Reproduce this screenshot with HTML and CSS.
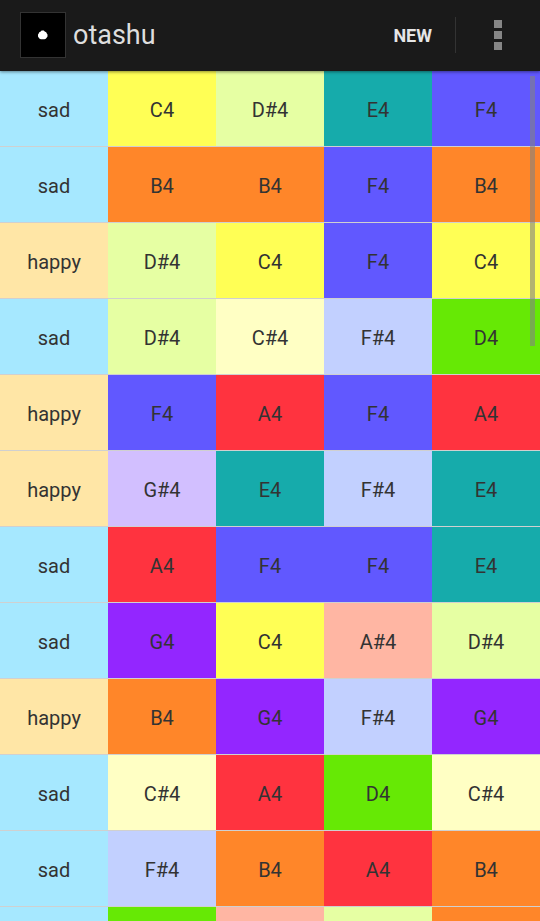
FILE: index.html
```html
<!DOCTYPE html>
<html lang="en">
<head>
<meta charset="utf-8">
<title>otashu</title>
<link rel="stylesheet" href="styles.css">
</head>
<body>
<div class="app">
  <header class="bar">
    <div class="logo"><svg width="12" height="12" viewBox="0 0 12 12"><path d="M4.6 1.4h2.2l.9 1.2 1.5.7.6 1.3.7.9v1.9l-.7 1.2-1 1.1-1.3.5H3.9l-1.3-.5-1-1.1-.6-1.2V5.5l.7-.9.6-1.3 1.4-.7z" fill="#fff"/></svg></div>
    <div class="title">otashu</div>
    <div class="new">NEW</div>
    <div class="divider"></div>
    <div class="more"><span class="dot"></span><span class="dot"></span><span class="dot"></span></div>
  </header>
  <main class="grid">
    <div class="row"><div class="cell sad">sad</div><div class="cell c">C4</div><div class="cell ds">D#4</div><div class="cell e">E4</div><div class="cell f">F4</div></div>
    <div class="row"><div class="cell sad">sad</div><div class="cell b">B4</div><div class="cell b">B4</div><div class="cell f">F4</div><div class="cell b">B4</div></div>
    <div class="row"><div class="cell happy">happy</div><div class="cell ds">D#4</div><div class="cell c">C4</div><div class="cell f">F4</div><div class="cell c">C4</div></div>
    <div class="row"><div class="cell sad">sad</div><div class="cell ds">D#4</div><div class="cell cs">C#4</div><div class="cell fs">F#4</div><div class="cell d">D4</div></div>
    <div class="row"><div class="cell happy">happy</div><div class="cell f">F4</div><div class="cell a">A4</div><div class="cell f">F4</div><div class="cell a">A4</div></div>
    <div class="row"><div class="cell happy">happy</div><div class="cell gs">G#4</div><div class="cell e">E4</div><div class="cell fs">F#4</div><div class="cell e">E4</div></div>
    <div class="row"><div class="cell sad">sad</div><div class="cell a">A4</div><div class="cell f">F4</div><div class="cell f">F4</div><div class="cell e">E4</div></div>
    <div class="row"><div class="cell sad">sad</div><div class="cell g">G4</div><div class="cell c">C4</div><div class="cell as">A#4</div><div class="cell ds">D#4</div></div>
    <div class="row"><div class="cell happy">happy</div><div class="cell b">B4</div><div class="cell g">G4</div><div class="cell fs">F#4</div><div class="cell g">G4</div></div>
    <div class="row"><div class="cell sad">sad</div><div class="cell cs">C#4</div><div class="cell a">A4</div><div class="cell d">D4</div><div class="cell cs">C#4</div></div>
    <div class="row"><div class="cell sad">sad</div><div class="cell fs">F#4</div><div class="cell b">B4</div><div class="cell a">A4</div><div class="cell b">B4</div></div>
    <div class="row"><div class="cell sad"></div><div class="cell d"></div><div class="cell as"></div><div class="cell ds"></div><div class="cell b"></div></div>
  </main>
  <div class="scrollbar"></div>
</div>
</body>
</html>
```
FILE: styles.css
```css
* { box-sizing: border-box; }
html, body { margin: 0; padding: 0; }
body { font-family: Roboto, sans-serif; background: #000; }
.app { position: relative; width: 540px; height: 921px; overflow: hidden; background: #d0d0d0; }
.bar {
  position: relative;
  z-index: 2;
  height: 71px;
  background: #1a1a1a;
  display: flex;
  align-items: center;
  padding: 0 20px;
  box-shadow: 0 1px 3px rgba(0,0,0,.45);
}
.logo {
  width: 46px; height: 46px;
  background: #000;
  border: 1px solid #333;
  display: flex; align-items: center; justify-content: center;
  margin-top: -1px;
}
.title { margin-left: 7px; color: #dedede; font-size: 27px; line-height: 1; }
.new { margin-left: auto; color: #e6e6e6; font-size: 18px; font-weight: 700; margin-right: 1px; }
.divider { width: 1px; height: 36px; background: #333; margin-left: 22px; margin-top: -1px; }
.more { width: 84px; margin-right: -20px; display: flex; flex-direction: column; align-items: center; gap: 3px; margin-top: -1px; }
.dot { width: 8px; height: 8px; background: #868686; }
.grid { display: flex; flex-direction: column; gap: 1px; }
.row { display: grid; grid-template-columns: repeat(5, 108px); height: 75px; flex: none; }
.cell { display: flex; align-items: center; justify-content: center; font-size: 20px; color: #333; padding-top: 2px; }
.sad { background: #a6e8ff; }
.happy { background: #ffe6a6; }
.c { background: #ffff55; }
.cs { background: #ffffc4; }
.d { background: #66e905; }
.ds { background: #e6ffa3; }
.e { background: #16abab; }
.f { background: #6158ff; }
.fs { background: #c2d0ff; }
.g { background: #9326ff; }
.gs { background: #d2bfff; }
.a { background: #ff333f; }
.as { background: #ffb6a3; }
.b { background: #ff8629; }
.scrollbar { position: absolute; right: 5px; top: 76px; width: 5px; height: 270px; background: rgba(130,130,130,.6); z-index: 1; }
```
